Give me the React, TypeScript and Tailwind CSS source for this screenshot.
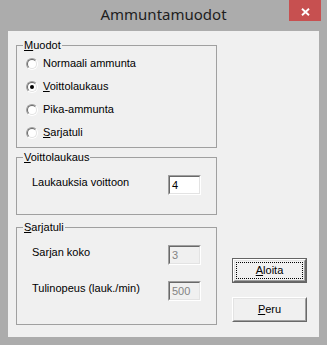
import React from "react";

function Radio({ checked }: { checked?: boolean }) {
  return (
    <div className="w-[12px] h-[12px] rounded-full border border-t-[#a0a0a0] border-l-[#a0a0a0] border-b-white border-r-white shrink-0">
      <div className="w-full h-full rounded-full border border-t-[#696969] border-l-[#696969] border-b-[#e3e3e3] border-r-[#e3e3e3] bg-white flex items-center justify-center">
        {checked && <div className="w-[4px] h-[4px] rounded-full bg-black" />}
      </div>
    </div>
  );
}

function RadioRow({ checked, children }: { checked?: boolean; children: React.ReactNode }) {
  return (
    <div className="h-[13px] flex items-center">
      <Radio checked={checked} />
      <span className="ml-[5px] leading-[13px]">{children}</span>
    </div>
  );
}

function Field({ value, disabled }: { value: string; disabled?: boolean }) {
  return (
    <div className="w-[33px] h-[20px] border border-t-[#a0a0a0] border-l-[#a0a0a0] border-b-white border-r-white shrink-0">
      <div
        className={
          "w-full h-full border border-t-[#696969] border-l-[#696969] border-b-[#e3e3e3] border-r-[#e3e3e3] flex items-center pl-[2px] leading-[13px] " +
          (disabled ? "bg-[#f0f0f0] text-[#838383]" : "bg-white text-black")
        }
      >
        {value}
      </div>
    </div>
  );
}

function Group({
  label,
  className,
  children,
}: {
  label: React.ReactNode;
  className: string;
  children: React.ReactNode;
}) {
  return (
    <fieldset className={"w-[201px] border border-[#a0a0a0] " + className}>
      <legend className="ml-[6px] px-[1px] leading-[13px]">{label}</legend>
      {children}
    </fieldset>
  );
}

function Raised({ children }: { children: React.ReactNode }) {
  return (
    <div className="w-full h-full border border-t-white border-l-white border-b-[#696969] border-r-[#696969]">
      <div className="w-full h-full border border-t-[#e3e3e3] border-l-[#e3e3e3] border-b-[#a0a0a0] border-r-[#a0a0a0] bg-[#f0f0f0]">
        {children}
      </div>
    </div>
  );
}

export default function App() {
  return (
    <div className="w-[327px] h-[345px] bg-[#acacac] flex flex-col font-['Liberation_Sans',Arial,sans-serif] overflow-hidden">
      <div className="h-[31px] shrink-0 relative flex items-center justify-center pb-[2px]">
        <span className="font-['Noto_Sans',sans-serif] text-[15px] text-[#1e1e1e] leading-none">
          Ammuntamuodot
        </span>
        <div className="absolute right-[6px] top-0 w-[32px] h-[21px] bg-[#c75050] flex items-center justify-center pt-[2px]">
          <svg width="9" height="8" viewBox="0 0 9 8">
            <path d="M1 0.8 L8 7.2 M8 0.8 L1 7.2" stroke="#ffffff" strokeWidth="1.9" fill="none" />
          </svg>
        </div>
      </div>
      <div className="ml-[8px] w-[311px] h-[306px] bg-[#f0f0f0] flex text-[11px] text-black">
        <div className="pl-[8px] pt-[8px] flex flex-col">
          <Group
            className="h-[109px]"
            label={
              <>
                <u>M</u>uodot
              </>
            }
          >
            <div className="pl-[9px] pt-[5px] flex flex-col gap-[10px]">
              <RadioRow>Normaali ammunta</RadioRow>
              <RadioRow checked>
                <u>V</u>oittolaukaus
              </RadioRow>
              <RadioRow>Pika-ammunta</RadioRow>
              <RadioRow>
                <u>S</u>arjatuli
              </RadioRow>
            </div>
          </Group>
          <Group
            className="h-[64px] mt-[3px]"
            label={
              <>
                <u>V</u>oittolaukaus
              </>
            }
          >
            <div className="px-[15px] pt-[11px] flex justify-between items-start">
              <span className="mt-[1px] leading-[13px]">Laukauksia voittoon</span>
              <Field value="4" />
            </div>
          </Group>
          <Group
            className="h-[104px] mt-[6px]"
            label={
              <>
                <u>S</u>arjatuli
              </>
            }
          >
            <div className="px-[15px] pt-[11px] flex flex-col gap-[16px]">
              <div className="flex justify-between items-start">
                <span className="mt-[1px] leading-[13px]">
                  Sar<u>j</u>an koko
                </span>
                <Field value="3" disabled />
              </div>
              <div className="flex justify-between items-start">
                <span className="mt-[1px] leading-[13px]">Tulinopeus (lauk./min)</span>
                <Field value="500" disabled />
              </div>
            </div>
          </Group>
        </div>
        <div className="ml-[15px] pb-[15px] flex flex-col justify-end gap-[14px]">
          <div className="w-[75px] h-[25px] border border-[#646464]">
            <Raised>
              <div className="w-full h-full p-[1px]">
                <div className="w-full h-full border border-dotted border-black flex items-center justify-center leading-[13px]">
                  <span>
                    <u>A</u>loita
                  </span>
                </div>
              </div>
            </Raised>
          </div>
          <div className="w-[75px] h-[25px]">
            <Raised>
              <div className="w-full h-full flex items-center justify-center leading-[13px]">
                <span>
                  <u>P</u>eru
                </span>
              </div>
            </Raised>
          </div>
        </div>
      </div>
    </div>
  );
}
